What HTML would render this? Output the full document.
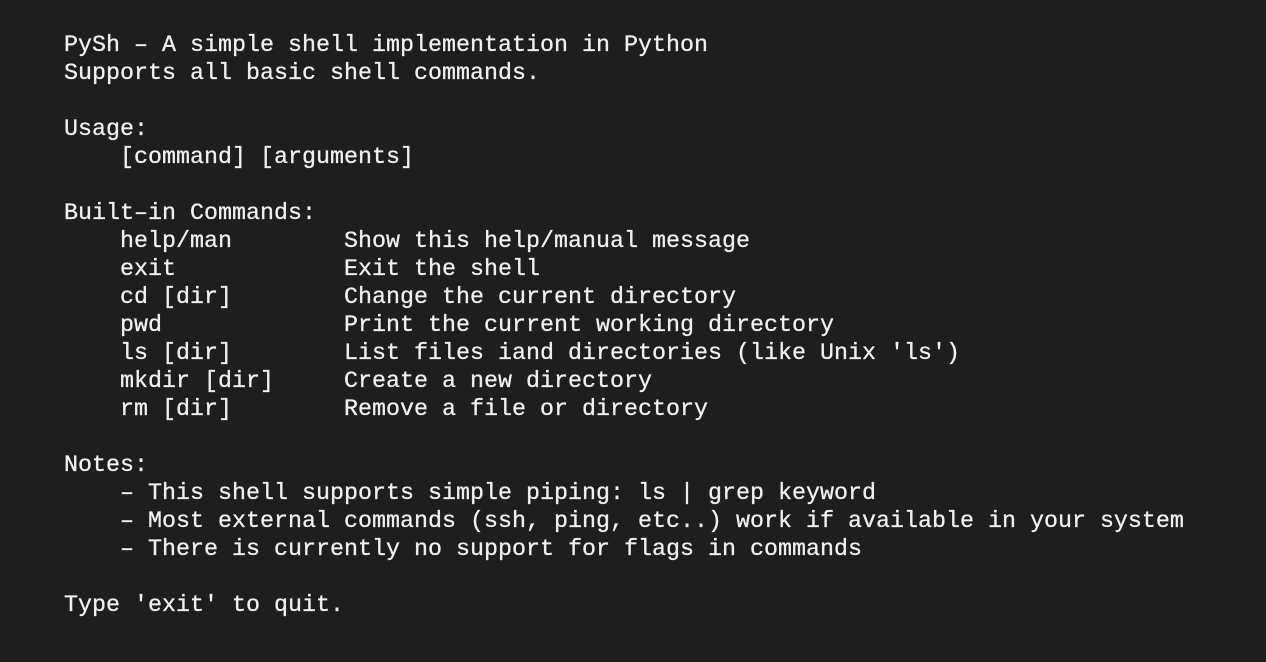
<!DOCTYPE html>
<html><head><meta charset="utf-8"><style>
html,body{margin:0;padding:0;background:#1e1e1e;width:1266px;height:662px;overflow:hidden}
pre{margin:0;padding:32px 0 0 64px;font-family:"Liberation Mono",monospace;font-size:23.33px;line-height:28px;color:#f0f0f0;-webkit-text-stroke:0.3px #f0f0f0;}
</style></head><body><pre>PySh – A simple shell implementation in Python
Supports all basic shell commands.

Usage:
    [command] [arguments]

Built–in Commands:
    help/man        Show this help/manual message
    exit            Exit the shell
    cd [dir]        Change the current directory
    pwd             Print the current working directory
    ls [dir]        List files iand directories (like Unix 'ls')
    mkdir [dir]     Create a new directory
    rm [dir]        Remove a file or directory

Notes:
    – This shell supports simple piping: ls | grep keyword
    – Most external commands (ssh, ping, etc..) work if available in your system
    – There is currently no support for flags in commands

Type 'exit' to quit.</pre></body></html>
